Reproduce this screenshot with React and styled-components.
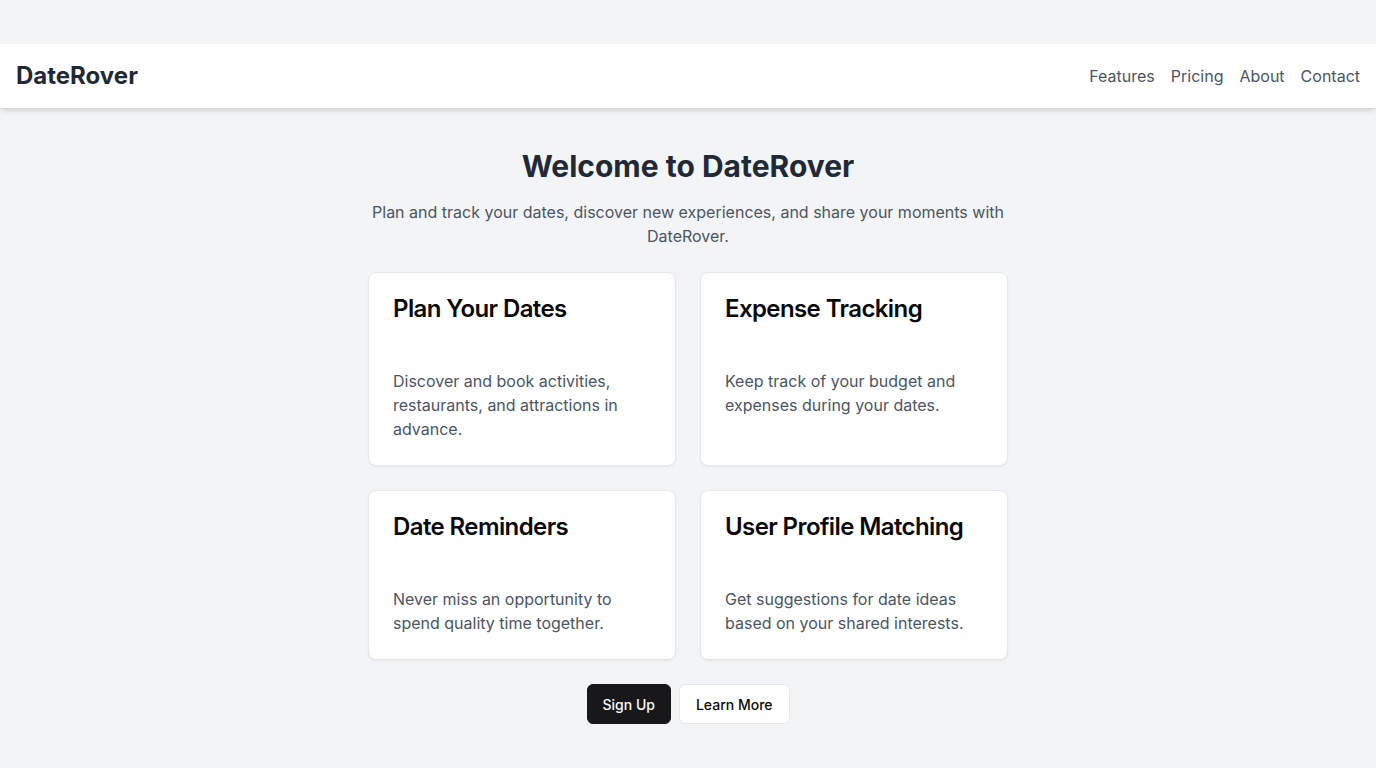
import React from "react";
import styled, { createGlobalStyle } from "styled-components";

const GlobalStyle = createGlobalStyle`
  * { box-sizing: border-box; }
  body {
    margin: 0;
    background: #f3f4f6;
    font-family: Inter, "Noto Sans", sans-serif;
    -webkit-font-smoothing: antialiased;
  }
`;

const Page = styled.div`
  min-height: 100vh;
  padding-top: 44px;
  background: #f3f4f6;
`;

const Header = styled.header`
  height: 64px;
  background: #ffffff;
  box-shadow: 0 4px 6px -1px rgba(0, 0, 0, 0.1), 0 2px 4px -2px rgba(0, 0, 0, 0.1);
  display: flex;
  align-items: center;
  justify-content: space-between;
  padding: 0 16px;
`;

const Logo = styled.div`
  font-size: 24px;
  line-height: 32px;
  font-weight: 700;
  color: #1f2937;
`;

const Nav = styled.nav`
  display: flex;
  gap: 16px;
`;

const NavLink = styled.a`
  font-size: 16px;
  line-height: 24px;
  color: #4b5563;
  text-decoration: none;
  cursor: pointer;
`;

const Main = styled.main`
  max-width: 640px;
  margin: 0 auto;
  padding-top: 40px;
  display: flex;
  flex-direction: column;
  align-items: center;
`;

const Title = styled.h1`
  margin: 0 0 16px;
  font-size: 30px;
  line-height: 36px;
  font-weight: 700;
  color: #1f2937;
  text-align: center;
`;

const Subtitle = styled.p`
  margin: 0 0 24px;
  font-size: 16px;
  line-height: 24px;
  color: #4b5563;
  text-align: center;
`;

const Grid = styled.div`
  width: 100%;
  display: grid;
  grid-template-columns: 1fr 1fr;
  gap: 24px;
  margin-bottom: 24px;
`;

const Card = styled.div`
  background: #ffffff;
  border: 1px solid #e5e7eb;
  border-radius: 8px;
  box-shadow: 0 1px 2px rgba(0, 0, 0, 0.05);
`;

const CardHeader = styled.div`
  padding: 24px;
`;

const CardTitle = styled.h3`
  margin: 0;
  font-size: 24px;
  line-height: 24px;
  font-weight: 600;
  letter-spacing: -0.025em;
  color: #09090b;
`;

const CardContent = styled.div`
  padding: 24px;
`;

const CardText = styled.p`
  margin: 0;
  font-size: 16px;
  line-height: 24px;
  color: #4b5563;
`;

const Actions = styled.div`
  display: flex;
  gap: 8px;
`;

const Button = styled.button`
  height: 40px;
  padding: 0 ${(p) => (p.$primary ? "15px" : "16px")};
  border-radius: 6px;
  font-family: inherit;
  font-size: 14px;
  font-weight: 500;
  cursor: pointer;
  border: 1px solid ${(p) => (p.$primary ? "#18181b" : "#e5e7eb")};
  background: ${(p) => (p.$primary ? "#18181b" : "#ffffff")};
  color: ${(p) => (p.$primary ? "#fafafa" : "#09090b")};
`;

const features = [
  {
    title: "Plan Your Dates",
    text: "Discover and book activities, restaurants, and attractions in advance.",
  },
  {
    title: "Expense Tracking",
    text: "Keep track of your budget and expenses during your dates.",
  },
  {
    title: "Date Reminders",
    text: "Never miss an opportunity to spend quality time together.",
  },
  {
    title: "User Profile Matching",
    text: "Get suggestions for date ideas based on your shared interests.",
  },
];

const App = () => {
  return (
    <Page>
      <GlobalStyle />
      <Header>
        <Logo>DateRover</Logo>
        <Nav>
          <NavLink>Features</NavLink>
          <NavLink>Pricing</NavLink>
          <NavLink>About</NavLink>
          <NavLink>Contact</NavLink>
        </Nav>
      </Header>
      <Main>
        <Title>Welcome to DateRover</Title>
        <Subtitle>
          Plan and track your dates, discover new experiences, and share your moments with DateRover.
        </Subtitle>
        <Grid>
          {features.map((f) => (
            <Card key={f.title}>
              <CardHeader>
                <CardTitle>{f.title}</CardTitle>
              </CardHeader>
              <CardContent>
                <CardText>{f.text}</CardText>
              </CardContent>
            </Card>
          ))}
        </Grid>
        <Actions>
          <Button $primary>Sign Up</Button>
          <Button>Learn More</Button>
        </Actions>
      </Main>
    </Page>
  );
};

export default App;
